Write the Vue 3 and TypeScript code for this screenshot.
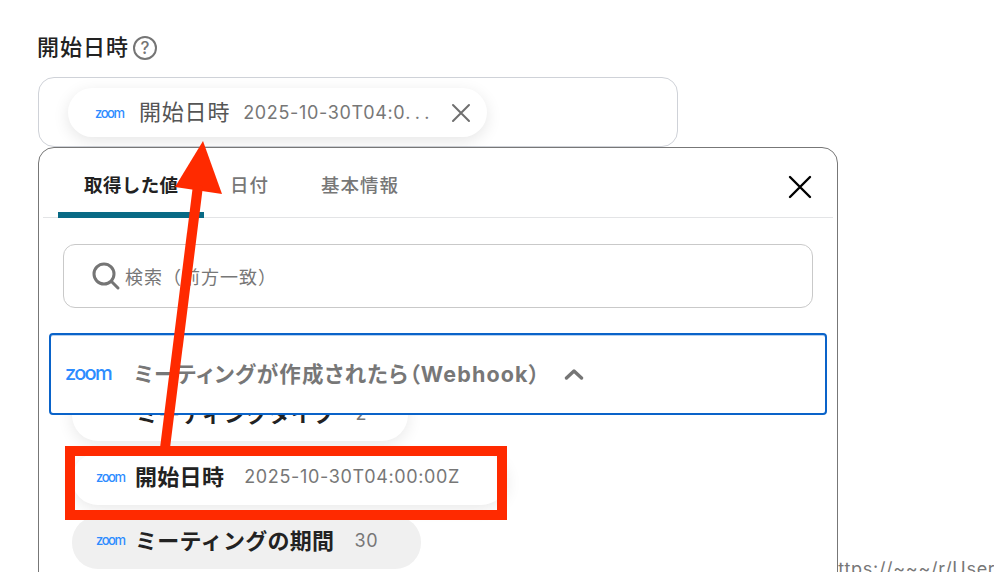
<script setup lang="ts">
const tabs = ['取得した値', '日付', '基本情報']
</script>

<template>
  <div class="page">
    <div class="url">https://~~~/r/User</div>

    <div class="label-row">
      <span class="label">開始日時</span>
      <svg class="help" width="26" height="26" viewBox="0 0 26 26" fill="none">
        <circle cx="13" cy="13" r="11" stroke="#757575" stroke-width="2" />
        <text x="13" y="19" text-anchor="middle" class="help-mark">?</text>
      </svg>
    </div>

    <div class="field">
      <div class="chip selected">
        <span class="zoom small">zoom</span>
        <span class="chip-name">開始日時</span>
        <span class="chip-value">2025-10-30T04:0<span class="dots">...</span></span>
        <svg class="chip-close" width="20" height="20" viewBox="0 0 20 20">
          <path d="M2 2 L18 18 M18 2 L2 18" stroke="#6f6f6f" stroke-width="2" stroke-linecap="round" />
        </svg>
      </div>
    </div>

    <div class="dialog">
      <div class="tab-bar">
        <div v-for="(tab, i) in tabs" :key="tab" class="tab" :class="{ active: i === 0 }">{{ tab }}</div>
        <svg class="dialog-close" width="24" height="24" viewBox="0 0 24 24">
          <path d="M2 2 L22 22 M22 2 L2 22" stroke="#000" stroke-width="2.4" stroke-linecap="round" />
        </svg>
      </div>

      <div class="search">
        <svg width="30" height="30" viewBox="0 0 30 30" fill="none">
          <circle cx="13" cy="13" r="10" stroke="#757575" stroke-width="3" />
          <path d="M20.5 20.5 L27 27" stroke="#757575" stroke-width="3" stroke-linecap="round" />
        </svg>
        <span class="placeholder">検索（前方一致）</span>
      </div>

      <div class="group">
        <span class="zoom large">zoom</span>
        <span class="group-title">ミーティングが作成されたら（Webhook）</span>
        <svg class="chevron" width="20" height="12" viewBox="0 0 20 12" fill="none">
          <path d="M2.5 10 L10 3 L17.5 10" stroke="#757575" stroke-width="3.4" stroke-linecap="round" stroke-linejoin="round" />
        </svg>
      </div>

      <div class="list">
        <div class="row first">
          <span class="row-name">ミーティングタイプ</span>
          <span class="row-value">2</span>
        </div>
        <div class="row current">
          <span class="zoom small">zoom</span>
          <span class="row-name">開始日時</span>
          <span class="row-value">2025-10-30T04:00:00Z</span>
        </div>
        <div class="row grey">
          <span class="zoom small">zoom</span>
          <span class="row-name">ミーティングの期間</span>
          <span class="row-value">30</span>
        </div>
      </div>
    </div>

    <!-- annotation on top of the screenshot -->
    <div class="mark-box"></div>
    <svg class="mark-arrow" width="994" height="572" viewBox="0 0 994 572">
      <polygon points="203,141 175,187 222,194" fill="#ff2a00" />
      <polygon points="193,185 203,186 170,448 160,448" fill="#ff2a00" />
    </svg>
  </div>
</template>

<style>
html,
body {
  margin: 0;
  background: #fff;
}
</style>

<style scoped>
.page {
  position: relative;
  box-sizing: border-box;
  width: 994px;
  height: 572px;
  padding: 33px 0 0 38px;
  overflow: hidden;
  background: #fff;
  color: #222;
  font-family: Inter, "Noto Sans CJK JP", sans-serif;
}

.url {
  position: absolute;
  left: 827px;
  top: 558px;
  font-size: 18px;
  line-height: 22px;
  letter-spacing: 0.7px;
  color: #777;
  white-space: nowrap;
}

.label-row {
  display: flex;
  align-items: center;
  gap: 3px;
  height: 30px;
}

.label {
  margin-left: -1px;
  padding-bottom: 6px;
  font-size: 22px;
  font-weight: 500;
  letter-spacing: 1px;
}

.help-mark {
  font-size: 17px;
  font-weight: 500;
  fill: #757575;
}

.field {
  box-sizing: border-box;
  width: 640px;
  height: 70px;
  margin-top: 14px;
  padding: 10px 0 0 29px;
  border: 1px solid #cfd2d8;
  border-radius: 16px;
}

.zoom {
  color: #2d8cff;
  font-family: Inter, sans-serif;
  font-weight: 500;
}

.zoom.small {
  width: 30px;
  flex: none;
  font-size: 13px;
  letter-spacing: -1.4px;
}

.zoom.large {
  width: 47px;
  flex: none;
  font-size: 20px;
  letter-spacing: -1.7px;
}

.chip {
  display: flex;
  align-items: center;
  box-sizing: border-box;
  width: 419px;
  height: 49px;
  padding-left: 27px;
  border-radius: 25px;
  background: #fff;
  box-shadow: 0 4px 16px rgba(0, 0, 0, 0.1);
}

.chip-name {
  margin-left: 14px;
  padding-bottom: 5px;
  font-size: 22px;
  letter-spacing: 0.8px;
  color: #555;
}

.chip-value {
  margin-left: 13px;
  font-size: 18px;
  letter-spacing: 0.65px;
  color: #777;
  white-space: nowrap;
}

.dots {
  letter-spacing: 4.3px;
}

.chip-close {
  margin-left: 17px;
}

.dialog {
  position: relative;
  z-index: 1;
  box-sizing: border-box;
  width: 800px;
  height: 520px;
  border: 1px solid #777;
  border-radius: 16px;
  background: #fff;
  overflow: hidden;
}

.tab-bar {
  display: flex;
  align-items: flex-start;
  box-sizing: border-box;
  height: 70px;
  margin: 0 4px;
  padding-left: 15px;
  border-bottom: 1px solid #e3e4e6;
}

.tab {
  box-sizing: border-box;
  height: 70px;
  padding-top: 24px;
  margin-right: 52px;
  font-size: 18.5px;
  line-height: 26px;
  font-weight: 500;
  letter-spacing: 1px;
  color: #777;
  white-space: nowrap;
}

.tab.active {
  width: 146px;
  margin-right: 26px;
  padding-left: 26px;
  font-weight: 700;
  letter-spacing: 0.4px;
  color: #222;
  border-bottom: 6px solid #086a85;
  border-radius: 8px 8px 0 0;
}

.dialog-close {
  margin: 27px 21px 0 auto;
}

.search {
  display: flex;
  align-items: center;
  box-sizing: border-box;
  width: 750px;
  height: 64px;
  margin: 26px 0 0 24px;
  padding-left: 27px;
  border: 1px solid #c9c9c9;
  border-radius: 12px;
}

.placeholder {
  margin-left: 4px;
  font-size: 18px;
  letter-spacing: 1px;
  color: #777;
}

.group {
  position: relative;
  z-index: 1;
  display: flex;
  align-items: center;
  box-sizing: border-box;
  width: 778px;
  height: 82px;
  margin: 25px 0 0 10px;
  padding: 0 0 3px 14px;
  border: 2px solid #0a63c9;
  border-radius: 4px;
  background: #fff;
  box-shadow: inset 0 1px 0 rgba(10, 99, 201, 0.3);
}

.group-title {
  margin: 0 23px 0 22px;
  font-size: 21.5px;
  font-weight: 700;
  font-feature-settings: "palt";
  letter-spacing: 1.15px;
  color: #777;
  white-space: nowrap;
}

.chevron {
  margin-top: 3px;
}

.list {
  display: flex;
  flex-direction: column;
  align-items: flex-start;
  gap: 12px;
  margin: -30px 0 0 33px;
}

.row {
  display: flex;
  align-items: center;
  box-sizing: border-box;
  height: 52px;
  padding: 0 0 5px 24px;
  border-radius: 26px;
  background: #fff;
  white-space: nowrap;
}

.row.first {
  width: 336px;
  height: 56px;
  padding: 0 0 0 55px;
  box-shadow: 0 4px 16px rgba(0, 0, 0, 0.09);
}

.row.current {
  width: 435px;
  box-shadow: 0 4px 16px rgba(0, 0, 0, 0.09);
}

.row.grey {
  width: 349px;
  height: 53px;
  margin-top: -1px;
  background: #f0f0f0;
}

.row-name {
  margin-left: 9px;
  padding-bottom: 3px;
  font-size: 22px;
  font-weight: 700;
  letter-spacing: 0.3px;
  color: #222;
}

.row-value {
  margin-left: 20px;
  font-size: 18px;
  letter-spacing: 0.65px;
  color: #777;
}

.mark-box {
  position: absolute;
  z-index: 2;
  left: 65px;
  top: 446px;
  box-sizing: border-box;
  width: 442px;
  height: 74px;
  border: 10px solid #ff2a00;
}

.mark-arrow {
  position: absolute;
  z-index: 2;
  left: 0;
  top: 0;
  pointer-events: none;
}
</style>
